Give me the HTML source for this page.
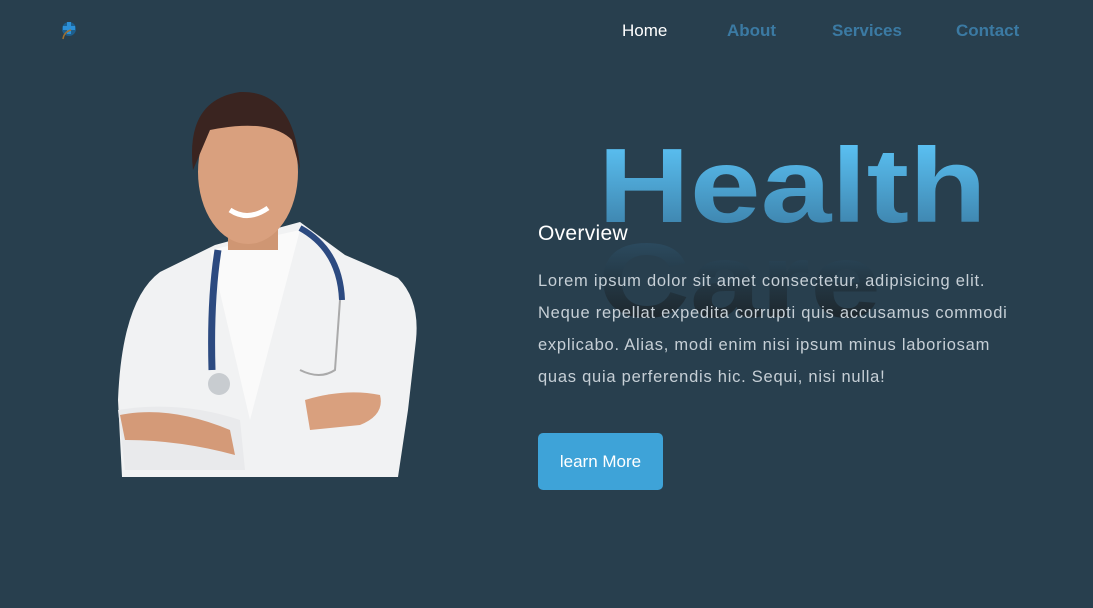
<!DOCTYPE html>
<html><head><meta charset="utf-8"><style>
html,body{margin:0;padding:0}
body{width:1093px;height:608px;background:#283f4e;position:relative;overflow:hidden;font-family:"Liberation Sans",sans-serif}
.nav a{position:absolute;top:21px;font-size:17px;color:#3b7aa3;text-decoration:none;font-weight:bold}
.h{position:absolute;left:598px;font-weight:bold;font-size:106px;line-height:1;-webkit-background-clip:text;background-clip:text;color:transparent;transform:scaleX(1.2);transform-origin:0 0}
.h1{top:133px;background-image:linear-gradient(#5ec8fb,#3a7ca4)}
.h2{top:228px;background-image:linear-gradient(#2e5168,#1a1f22)}
.ov{position:absolute;left:538px;top:222px;color:#fff;font-size:21px;letter-spacing:.3px}
.p{position:absolute;left:538px;top:265px;width:485px;color:#c6cfd6;font-size:16.5px;line-height:32px;letter-spacing:.75px}
.btn{position:absolute;left:538px;top:433px;width:125px;height:57px;background:#3ea3d8;border-radius:5px;color:#fff;font-size:17px;line-height:57px;text-align:center}
</style></head><body>
<svg style="position:absolute;left:58px;top:19px" width="24" height="24" viewBox="0 0 24 24">
<circle cx="11" cy="10" r="7" fill="#1d5f8e"/><path d="M9 3h4v4h4v4h-4v4H9v-4H5V7h4z" fill="#2c8fd6"/><path d="M5 20 Q6 13 13 11" stroke="#a07030" stroke-width="1.5" fill="none"/></svg>
<div class="nav"><a style="left:622px;color:#fff;font-weight:normal">Home</a><a style="left:727px">About</a><a style="left:832px">Services</a><a style="left:956px">Contact</a></div>
<svg style="position:absolute;left:0;top:0" width="450" height="490">
<path d="M122,477 L118,400 Q122,300 160,272 L215,245 L300,222 L345,255 L398,278 Q420,300 416,340 L408,410 L398,477 Z" fill="#f1f2f3"/>
<path d="M210,250 L250,420 L300,230 Z" fill="#fafafa"/>
<path d="M118,410 Q180,400 240,420 L245,470 L125,470 Z" fill="#e9eaec"/>
<path d="M305,400 Q345,388 380,395 Q385,415 360,425 L310,430 Z" fill="#d9a07e"/>
<path d="M120,415 Q170,405 230,430 L235,455 Q180,440 125,440 Z" fill="#d49a78"/>
<rect x="228" y="200" width="50" height="50" fill="#cf9673"/>
<ellipse cx="248" cy="172" rx="50" ry="72" fill="#d9a07e"/>
<path d="M193,170 Q185,100 240,92 Q295,90 300,170 L292,140 Q270,118 210,130 Z" fill="#3a2420"/>
<path d="M230,210 Q248,222 268,208" stroke="#fff" stroke-width="5" fill="none"/>
<path d="M218,250 Q210,300 212,370" stroke="#2c4a80" stroke-width="7" fill="none"/>
<path d="M300,228 Q340,250 342,300" stroke="#2c4a80" stroke-width="6" fill="none"/>
<path d="M340,300 L335,370 Q320,380 300,370" stroke="#aaa" stroke-width="2" fill="none"/>
<circle cx="219" cy="384" r="11" fill="#c8ccd0"/>
</svg>
<div class="h h1">Health</div>
<div class="h h2">Care</div>
<div class="ov">Overview</div>
<div class="p">Lorem ipsum dolor sit amet consectetur, adipisicing elit. Neque repellat expedita corrupti quis accusamus commodi explicabo. Alias, modi enim nisi ipsum minus laboriosam quas quia perferendis hic. Sequi, nisi nulla!</div>
<div class="btn">learn More</div>
</body></html>
